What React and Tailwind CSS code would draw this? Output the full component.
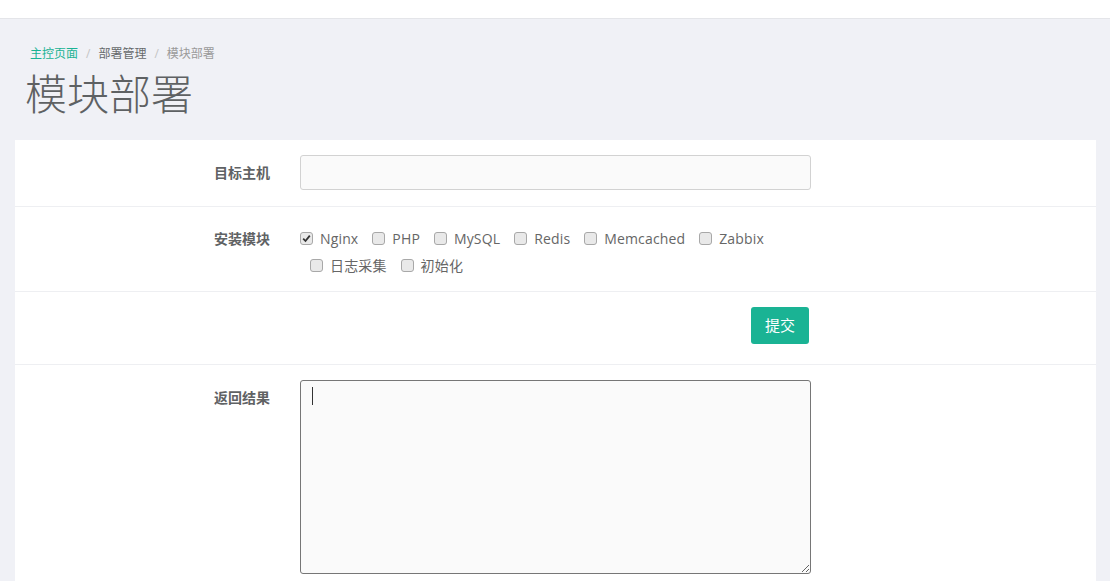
import React from "react";

const FONT = { fontFamily: '"Open Sans", "Noto Sans CJK SC", sans-serif' };

function Box({ checked }) {
  return (
    <span className="inline-flex items-center justify-center w-[13px] h-[13px] rounded-[3px] border border-[#a8a8a8] bg-[#e9e9e9] shrink-0">
      {checked && (
        <svg width="9" height="9" viewBox="0 0 9 9">
          <path d="M1.2 4.6 L3.5 7 L7.8 1.6" stroke="#333" strokeWidth="1.8" fill="none" />
        </svg>
      )}
    </span>
  );
}

function Item({ label, checked }) {
  return (
    <span className="inline-flex items-center gap-[7px] mr-[14px] h-[27px]">
      <Box checked={checked} />
      <span className="tracking-[0.15px]">{label}</span>
    </span>
  );
}

export default function App() {
  return (
    <div className="min-h-[581px] bg-[#f0f1f6] text-[#676a6c]" style={FONT}>
      <div className="h-[19px] bg-white border-b border-[#e4e5e9]" />
      <div className="pl-[30px] pt-[26px] text-[12px] leading-[18px] flex items-center">
        <span className="text-[#1ab394]">主控页面</span>
        <span className="text-[#c4c4c4] px-[8px]">/</span>
        <span className="text-[#676a6c]">部署管理</span>
        <span className="text-[#c4c4c4] px-[8px]">/</span>
        <span className="text-[#9a9a9a]">模块部署</span>
      </div>
      <h1 className="pl-[25px] mt-[6px] text-[42px] leading-[50px] font-light text-[#5e6163]">模块部署</h1>
      <div className="mt-[21px] mx-[15px] mr-[14px] bg-white text-[14px]">
        <div className="flex items-center pt-[15px] pb-[16px] border-b border-[#eeeff2]">
          <div className="w-[255px] text-right font-bold text-[#5f6264]">目标主机</div>
          <div className="ml-[30px] w-[511px] h-[35px] rounded-[3px] border border-[#d2d2d2] bg-[#fafafa]" />
        </div>
        <div className="flex items-start pt-[18px] pb-[12px] border-b border-[#eeeff2]">
          <div className="w-[255px] text-right font-bold text-[#5f6264] leading-[27px]">安装模块</div>
          <div className="ml-[30px] w-[520px] flex flex-col text-[#666]">
            <div className="flex">
              <Item label="Nginx" checked />
              <Item label="PHP" />
              <Item label="MySQL" />
              <Item label="Redis" />
              <Item label="Memcached" />
              <Item label="Zabbix" />
            </div>
            <div className="flex pl-[10px]">
              <Item label="日志采集" />
              <Item label="初始化" />
            </div>
          </div>
        </div>
        <div className="flex pt-[15px] pb-[20px] border-b border-[#eeeff2]">
          <div className="w-[736px]" />
          <button className="w-[58px] h-[37px] rounded-[3px] bg-[#1ab394] text-white text-[15px]">提交</button>
        </div>
        <div className="flex items-start pt-[15px] pb-[7px]">
          <div className="w-[255px] text-right font-bold text-[#5f6264] pt-[7px]">返回结果</div>
          <div className="ml-[30px] relative">
            <textarea
              readOnly
              className="block w-[511px] h-[194px] rounded-[3px] border border-[#767676] bg-[#fafafa] outline-none"
            />
            <span className="absolute left-[12px] top-[7px] w-px h-[18px] bg-[#333]" />
          </div>
        </div>
      </div>
    </div>
  );
}
